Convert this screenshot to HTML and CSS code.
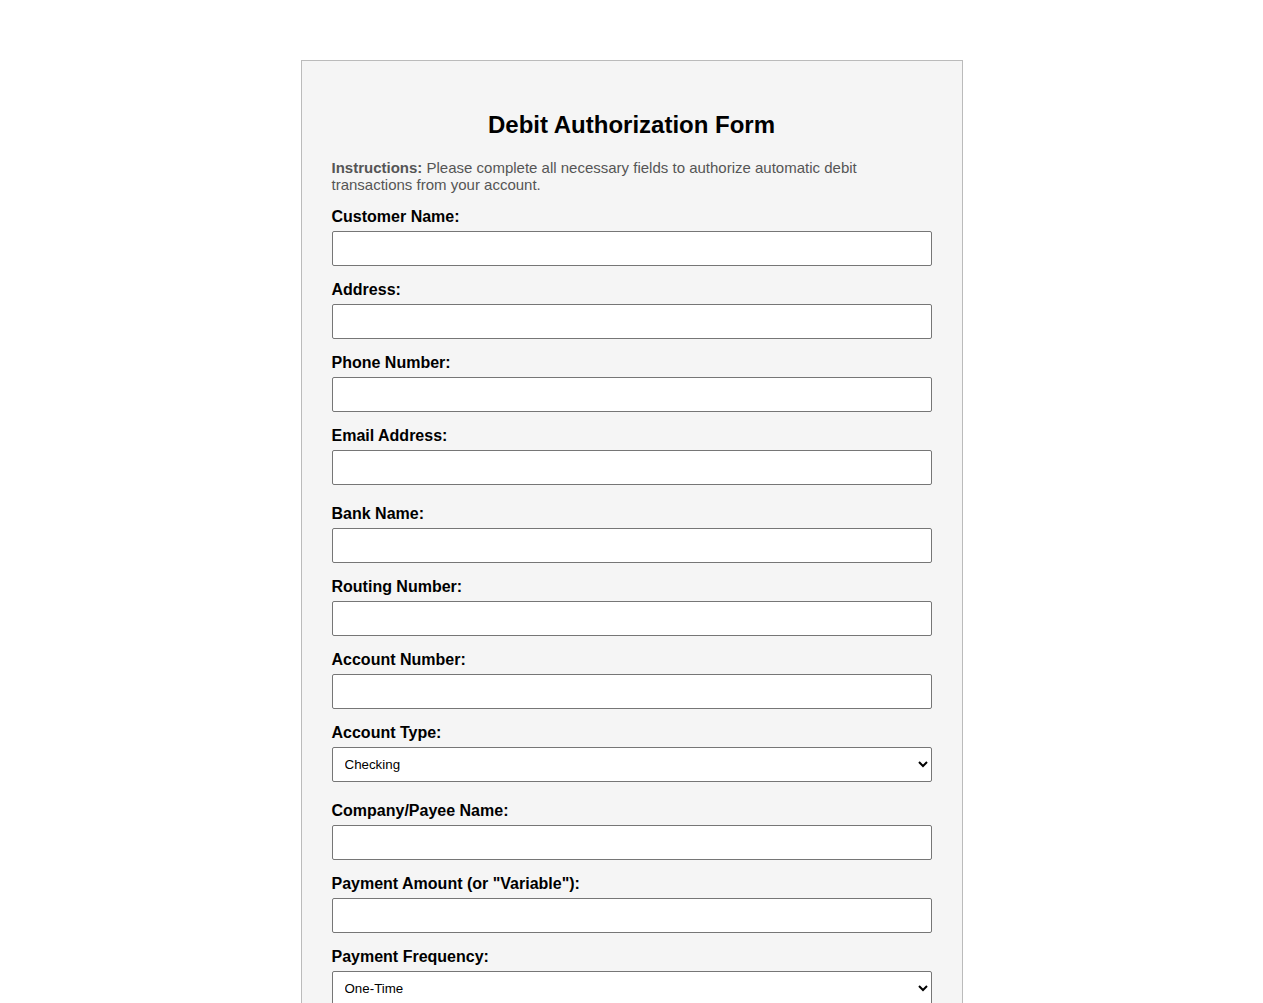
FILE: index.html
```html
<!DOCTYPE html>
<html lang="en">
<head>
    <meta charset="UTF-8">
    <meta name="viewport" content="width=device-width, initial-scale=1.0">
    <title>Debit Authorization Form</title>
    <link rel="stylesheet" href="styles.css">
</head>
<body>
    <div class="container">
        <h2>Debit Authorization Form</h2>

        <p class="instructions"><strong>Instructions:</strong> Please complete all necessary fields to authorize automatic debit transactions from your account.</p>

        <form>
            <label for="customerName">Customer Name:</label>
            <input type="text" id="customerName">

            <label for="address">Address:</label>
            <input type="text" id="address">

            <label for="phone">Phone Number:</label>
            <input type="tel" id="phone">

            <label for="email">Email Address:</label>
            <input type="email" id="email" class="field-gap">

            <label for="bankName">Bank Name:</label>
            <input type="text" id="bankName">

            <label for="routing">Routing Number:</label>
            <input type="text" id="routing">

            <label for="accountNumber">Account Number:</label>
            <input type="text" id="accountNumber">

            <label for="accountType">Account Type:</label>
            <select id="accountType" class="field-gap">
                <option>Checking</option>
                <option>Savings</option>
            </select>

            <label for="payee">Company/Payee Name:</label>
            <input type="text" id="payee">

            <label for="amount">Payment Amount (or "Variable"):</label>
            <input type="text" id="amount">

            <label for="frequency">Payment Frequency:</label>
            <select id="frequency" class="field-gap">
                <option>One-Time</option>
                <option>Weekly</option>
                <option>Monthly</option>
                <option>Annually</option>
            </select>

            <label for="startDate">Start Date:</label>
            <input type="date" id="startDate">

            <label for="signature">Customer Signature:</label>
            <input type="text" id="signature">

            <button type="submit" class="btn">Submit Authorization</button>
        </form>
    </div>
</body>
</html>
```

FILE: styles.css
```css
body {
    margin: 0;
    font-family: "Liberation Sans", Arial, sans-serif;
    background: #fff;
}

.container {
    width: 600px;
    margin: 60px auto;
    padding: 30px;
    background: #f5f5f5;
    border: 1px solid #bbb;
}

h2 {
    text-align: center;
    font-size: 24px;
    margin: 20px 0;
    color: #000;
}

.instructions {
    font-size: 15px;
    color: #555;
    margin: 0 0 15px;
}

label {
    display: block;
    font-weight: bold;
    font-size: 16px;
    line-height: 18px;
    margin-bottom: 5px;
    color: #000;
}

input,
select {
    display: block;
    box-sizing: border-box;
    width: 100%;
    height: 35px;
    padding: 0 8px;
    margin: 0 0 15px;
    font-family: "Liberation Sans", Arial, sans-serif;
    font-size: 14px;
    border: 1px solid #767676;
    border-radius: 2px;
    background: #fff;
    color: #000;
}

select {
    font-size: 13.33px;
}

.field-gap {
    margin-bottom: 20px;
}

.btn {
    padding: 12px 24px;
    border: none;
    border-radius: 4px;
    background: #333;
    color: #fff;
    font-size: 16px;
    cursor: pointer;
}
```
